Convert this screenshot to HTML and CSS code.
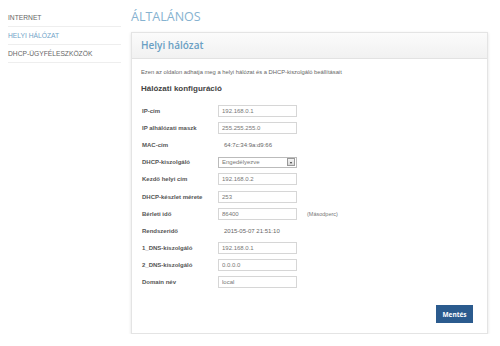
FILE: index.html
```html
<!DOCTYPE html>
<html lang="hu">
<head>
  <meta charset="UTF-8">
  <title>Helyi hálózat</title>
  <link rel="stylesheet" href="styles.css">
</head>
<body>
  <div class="page">
    <ul class="sidebar">
      <li>INTERNET</li>
      <li class="active">HELYI HÁLÓZAT</li>
      <li>DHCP-ÜGYFÉLESZKÖZÖK</li>
    </ul>
    <div class="main">
      <h1>ÁLTALÁNOS</h1>
      <div class="panel">
        <div class="panel-head">Helyi hálózat</div>
        <div class="panel-body">
          <p class="desc">Ezen az oldalon adhatja meg a helyi hálózat és a DHCP-kiszolgáló beállításait</p>
          <h3>Hálózati konfiguráció</h3>
          <div class="form">
            <label>IP-cím</label>
            <div class="field"><input type="text" value="192.168.0.1"></div>
            <label>IP alhálózati maszk</label>
            <div class="field"><input type="text" value="255.255.255.0"></div>
            <label>MAC-cím</label>
            <div class="field"><span class="value">64:7c:34:9a:d9:66</span></div>
            <label>DHCP-kiszolgáló</label>
            <div class="field">
              <div class="select">
                <span>Engedélyezve</span>
                <span class="arrow"></span>
              </div>
            </div>
            <label>Kezdő helyi cím</label>
            <div class="field"><input type="text" value="192.168.0.2"></div>
            <label>DHCP-készlet mérete</label>
            <div class="field"><input type="text" value="253"></div>
            <label>Bérleti idő</label>
            <div class="field"><input type="text" value="86400"><span class="unit">(Másodperc)</span></div>
            <label>Rendszeridő</label>
            <div class="field"><span class="value">2015-05-07 21:51:10</span></div>
            <label>1_DNS-kiszolgáló</label>
            <div class="field"><input type="text" value="192.168.0.1"></div>
            <label>2_DNS-kiszolgáló</label>
            <div class="field"><input type="text" value="0.0.0.0"></div>
            <label>Domain név</label>
            <div class="field"><input type="text" value="local"></div>
          </div>
          <div class="actions">
            <button class="btn">Mentés</button>
          </div>
        </div>
      </div>
    </div>
  </div>
</body>
</html>
```

FILE: styles.css
```css
body {
  margin: 0;
  background-color: #fff;
  font-family: "Liberation Sans", Arial, sans-serif;
  color: #555;
}
.page {
  display: flex;
  align-items: flex-start;
}
.sidebar {
  list-style: none;
  width: 113px;
  margin: 9px 0 0 8px;
  padding: 0;
}
.sidebar li {
  height: 17px;
  line-height: 17px;
  font-size: 6.7px;
  color: #666;
  border-bottom: 1px solid #eee;
}
.sidebar li.active {
  color: #6fa3c7;
}
.main {
  width: 357px;
  margin-left: 10px;
}
h1 {
  margin: 0;
  padding-top: 9px;
  height: 23px;
  font-family: "Open Sans", sans-serif;
  font-size: 12.5px;
  line-height: 16px;
  font-weight: 400;
  color: #86b2d0;
}
.panel {
  border: 1px solid #e4e4e4;
  box-shadow: 0 1px 3px rgba(0, 0, 0, 0.12);
  background-color: #fff;
}
.panel-head {
  height: 25px;
  line-height: 25px;
  padding-left: 9px;
  font-family: "Open Sans", sans-serif;
  font-size: 10px;
  font-weight: 600;
  color: #6a9fc3;
  background: linear-gradient(#fbfbfb, #f1f1f1);
  border-bottom: 1px solid #e2e2e2;
}
.panel-body {
  padding: 9px 14px 10px 9px;
}
.desc {
  margin: 0;
  font-size: 5.8px;
  line-height: 8px;
  color: #666;
}
h3 {
  margin: 8px 0 0;
  font-size: 8px;
  line-height: 10px;
  color: #444;
}
.form {
  display: grid;
  grid-template-columns: 77px 1fr;
  grid-auto-rows: 17.2px;
  margin-top: 8px;
}
.form label {
  display: flex;
  align-items: center;
  padding-left: 1px;
  font-size: 6px;
  font-weight: bold;
  color: #555;
}
.field {
  display: flex;
  align-items: center;
}
.field input {
  width: 79px;
  height: 12px;
  box-sizing: border-box;
  margin: 0;
  padding: 0 3px;
  border: 1px solid #d6d6d6;
  font-family: "Liberation Sans", Arial, sans-serif;
  font-size: 6px;
  color: #777;
  background-color: #fff;
}
.value {
  padding-left: 6px;
  font-size: 6px;
  color: #666;
}
.unit {
  margin-left: 10px;
  font-size: 5.5px;
  color: #777;
}
.select {
  display: flex;
  align-items: center;
  justify-content: space-between;
  width: 79px;
  height: 11px;
  box-sizing: border-box;
  padding: 0 1px 0 3px;
  border: 1px solid #bbb;
  font-size: 6px;
  color: #777;
}
.arrow {
  position: relative;
  width: 8px;
  height: 8px;
  box-sizing: border-box;
  border: 1px solid #999;
  background: linear-gradient(#f4f4f4, #d8d8d8);
}
.arrow::after {
  content: "";
  position: absolute;
  left: 1.5px;
  top: 2.5px;
  border-left: 1.5px solid transparent;
  border-right: 1.5px solid transparent;
  border-top: 2px solid #333;
}
.actions {
  display: flex;
  justify-content: flex-end;
  margin-top: 14px;
}
.btn {
  width: 37px;
  height: 18px;
  padding: 0;
  border: none;
  background-color: #2b5b8e;
  color: #fff;
  font-family: "Open Sans", sans-serif;
  font-size: 6.5px;
  font-weight: 700;
}
```
